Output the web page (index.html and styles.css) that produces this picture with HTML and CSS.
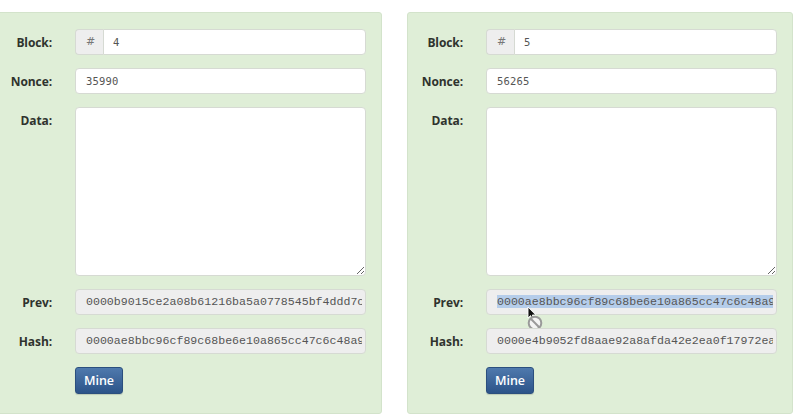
FILE: index.html
```html
<!DOCTYPE html>
<html>
<head>
<meta charset="utf-8">
<link rel="stylesheet" href="styles.css">
</head>
<body>
<div class="chain">
  <div class="card">
    <label class="lbl">Block:</label>
    <div class="group"><span class="addon">#</span><div class="field num">4</div></div>
    <label class="lbl">Nonce:</label>
    <div class="field num nonce">35990</div>
    <label class="lbl top">Data:</label>
    <textarea class="data"></textarea>
    <label class="lbl">Prev:</label>
    <div class="field ro"><span class="txt">0000b9015ce2a08b61216ba5a0778545bf4ddd7cc1a2f3e94b</span></div>
    <label class="lbl">Hash:</label>
    <div class="field ro"><span class="txt">0000ae8bbc96cf89c68be6e10a865cc47c6c48a9e2b71f0d3c</span></div>
    <span></span>
    <div><button class="mine">Mine</button></div>
  </div>
  <div class="card">
    <label class="lbl">Block:</label>
    <div class="group"><span class="addon">#</span><div class="field num">5</div></div>
    <label class="lbl">Nonce:</label>
    <div class="field num nonce">56265</div>
    <label class="lbl top">Data:</label>
    <textarea class="data"></textarea>
    <label class="lbl">Prev:</label>
    <div class="field ro prev"><span class="txt"><span class="sel">0000ae8bbc96cf89c68be6e10a865cc47c6c48a9e2b71f0d3c</span></span>
      <svg class="cursor" width="24" height="30" viewBox="0 0 24 30">
        <path d="M1 1 L1 12 L3.6 9.6 L5.4 13.6 L7 12.9 L5.3 9 L8.8 9 Z" fill="#111" stroke="#fff" stroke-width="0.9"/>
        <circle cx="8" cy="17" r="6.3" fill="#f4f4f4" stroke="#9a9a9a" stroke-width="2"/>
        <line x1="3.8" y1="12.8" x2="12.2" y2="21.2" stroke="#9a9a9a" stroke-width="2"/>
      </svg>
    </div>
    <label class="lbl">Hash:</label>
    <div class="field ro"><span class="txt">0000e4b9052fd8aae92a8afda42e2ea0f17972ea5c3d81b7a6</span></div>
    <span></span>
    <div><button class="mine">Mine</button></div>
  </div>
</div>
</body>
</html>
```

FILE: styles.css
```css
html, body {
  margin: 0;
  padding: 0;
  background: #ffffff;
  overflow: hidden;
}
body {
  width: 794px;
  height: 415px;
  font-family: "Open Sans", "Liberation Sans", Arial, sans-serif;
}
.chain {
  display: flex;
  gap: 25px;
  padding-top: 12px;
  margin-left: -4px;
}
.card {
  box-sizing: border-box;
  width: 386px;
  height: 402px;
  background: #dfeed7;
  border: 1px solid #d3e3cb;
  border-radius: 3px;
  padding: 16px 15px 18px 0;
  display: grid;
  grid-template-columns: 55px 291px;
  column-gap: 23px;
  row-gap: 13px;
  grid-template-rows: 26px 26px 169px 26px 26px 27px;
  align-items: center;
  align-content: start;
}
.lbl {
  text-align: right;
  font-weight: bold;
  font-size: 12px;
  color: #2f332e;
  letter-spacing: -0.1px;
}
.lbl.top {
  align-self: start;
  padding-top: 5px;
}
.group {
  display: flex;
  height: 26px;
}
.addon {
  box-sizing: border-box;
  width: 28px;
  height: 26px;
  background: #eeeeee;
  border: 1px solid #d6dad3;
  border-right: none;
  border-radius: 4px 0 0 4px;
  color: #777;
  font-family: "DejaVu Sans", sans-serif;
  font-size: 11px;
  line-height: 24px;
  padding-left: 10px;
}
.field {
  box-sizing: border-box;
  height: 26px;
  background: #ffffff;
  border: 1px solid #d6dad3;
  border-radius: 4px;
  font-family: "Liberation Mono", "Courier New", monospace;
  font-size: 11.6px;
  color: #555;
  line-height: 24px;
  padding: 0 3px 0 10px;
  white-space: nowrap;
  position: relative;
}
.group .field {
  flex: 1;
  border-radius: 0 4px 4px 0;
  font-family: "DejaVu Sans Mono", monospace;
  font-size: 10.5px;
  padding-left: 9px;
}
.nonce {
  font-family: "DejaVu Sans Mono", monospace;
  font-size: 10.5px;
  letter-spacing: 0.2px;
}
.ro {
  background: #eeeeee;
}
.txt {
  display: block;
  overflow: hidden;
  letter-spacing: 0;
}
.sel {
  background: #b5cdea;
}
.data {
  box-sizing: border-box;
  width: 291px;
  height: 169px;
  border: 1px solid #d6dad3;
  border-radius: 4px;
  background: #fff;
  resize: vertical;
  margin: 0;
  align-self: stretch;
}
.mine {
  box-sizing: border-box;
  width: 48px;
  height: 27px;
  border: 1px solid #2b4f7e;
  border-radius: 3px;
  background: linear-gradient(#4f79ad, #2c5489);
  color: #fff;
  font-family: "Open Sans", "Liberation Sans", sans-serif;
  font-size: 12.5px;
  font-weight: 600;
  padding: 0;
  box-shadow: 0 1px 1px rgba(0,0,0,0.15);
  display: block;
}
.cursor {
  position: absolute;
  left: 40px;
  top: 16px;
}
```
